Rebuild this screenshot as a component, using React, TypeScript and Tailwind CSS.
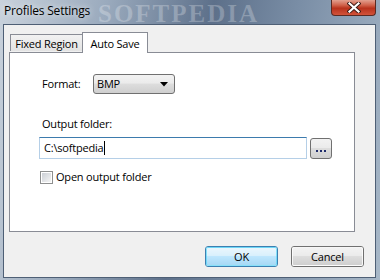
import React from "react";

const font = { fontFamily: '"Open Sans", "Noto Sans", sans-serif' };

function WinButton({ label, primary, className = "" }: { label: string; primary?: boolean; className?: string }) {
  return (
    <div
      className={`relative flex items-center justify-center rounded-[3px] border ${
        primary ? "border-[#3c7fb1]" : "border-[#707070]"
      } ${className}`}
    >
      <div
        className={`absolute inset-0 rounded-[2px] border ${primary ? "border-[#48d3f7]/60" : "border-white/80"}`}
        style={{
          background: primary
            ? "linear-gradient(#eaf6fd 0%, #d9f0fc 45%, #bee6fd 50%, #a7d9f5 100%)"
            : "linear-gradient(#f2f2f2 0%, #ebebeb 45%, #dddddd 50%, #cfcfcf 100%)",
        }}
      />
      <span className="relative text-[11px] leading-none tracking-[-0.2px] text-black">{label}</span>
    </div>
  );
}

export default function App() {
  return (
    <div
      className="relative flex h-[280px] w-[380px] flex-col overflow-hidden"
      style={{
        ...font,
        background: "linear-gradient(100deg, #c9d2dc 0%, #9aaabd 25%, #5d708a 50%, #7a8ea6 70%, #a8b8c8 100%)",
      }}
    >
      {/* title bar */}
      <div className="relative flex h-[24px] shrink-0 items-start">
        <span
          className="absolute left-[98px] top-[1px] text-[25px] font-bold leading-none tracking-[2px] text-white/25"
          style={{ fontFamily: '"Liberation Serif", serif' }}
        >
          SOFTPEDIA
        </span>
        <span
          className="relative ml-[4px] mt-[3px] text-[12px] leading-[16px] tracking-[-0.2px] text-black"
          style={{ textShadow: "0 0 6px rgba(255,255,255,0.9)" }}
        >
          Profiles Settings
        </span>
        <div
          className="absolute right-[4px] top-0 flex h-[16px] w-[45px] items-center justify-center rounded-b-[4px] border border-t-0 border-[#5b2a22]"
          style={{ background: "linear-gradient(#e2a08f 0%, #d0614a 35%, #b8321c 55%, #d2533a 100%)" }}
        >
          <svg width="14" height="11" viewBox="0 0 14 11">
            <path d="M2.5 1.5 L11.5 9.5 M11.5 1.5 L2.5 9.5" stroke="#3a1a14" strokeWidth="4" strokeLinecap="square" />
            <path d="M2.5 1.5 L11.5 9.5 M11.5 1.5 L2.5 9.5" stroke="#ffffff" strokeWidth="2.2" strokeLinecap="square" />
          </svg>
        </div>
      </div>

      {/* client area */}
      <div className="mb-[2px] ml-[3px] mr-[4px] flex flex-1 flex-col border border-[#4e5f75] bg-[#f0f0f0] text-[11px] tracking-[-0.2px]">
        {/* tabs */}
        <div className="ml-[6px] mt-[7px] flex h-[20px] items-end">
          <div
            className="mb-[1px] flex h-[17px] w-[73px] items-center justify-center border border-b-0 border-[#898c95]"
            style={{ background: "linear-gradient(#f2f2f2, #e3e3e3)" }}
          >
            <span className="leading-none text-black">Fixed Region</span>
          </div>
          <div className="relative z-10 -mb-[1px] -ml-[1px] flex h-[21px] w-[66px] items-center justify-center border border-b-0 border-[#898c95] bg-white">
            <span className="leading-none text-black">Auto Save</span>
          </div>
        </div>
        {/* panel */}
        <div className="ml-[5px] flex h-[180px] w-[346px] flex-col border border-[#898c95] bg-white pl-[29px]">
          <div className="mt-[21px] flex h-[20px] items-center">
            <span className="ml-[3px] w-[51px] text-black">Format:</span>
            <div
              className="relative flex h-[20px] w-[82px] items-center rounded-[3px] border border-[#707070]"
              style={{ background: "linear-gradient(#f2f2f2 0%, #ebebeb 45%, #dddddd 50%, #cfcfcf 100%)" }}
            >
              <span className="ml-[3px] text-black">BMP</span>
              <svg className="absolute right-[6px] top-[7px]" width="8" height="5" viewBox="0 0 8 5">
                <path d="M0 0 H8 L4 4.5 Z" fill="#000" />
              </svg>
            </div>
          </div>
          <span className="ml-[3px] mt-[22px] leading-[15px] text-black">Output folder:</span>
          <div className="mt-[6px] flex items-center">
            <div className="flex h-[22px] w-[268px] items-center border border-[#b5cfe7] border-t-[#3d7bad] bg-white">
              <span className="ml-[4px] text-black">C:\softpedia</span>
              <span className="ml-[1px] h-[14px] w-[1px] bg-black" />
            </div>
            <div
              className="ml-[3px] flex h-[21px] w-[22px] items-center justify-center rounded-[3px] border border-[#707070]"
              style={{ background: "linear-gradient(#f2f2f2 0%, #ebebeb 45%, #dddddd 50%, #cfcfcf 100%)" }}
            >
              <div className="mt-[5px] flex gap-[2px]">
                <span className="h-[2px] w-[2px] bg-[#1e2b6b]" />
                <span className="h-[2px] w-[2px] bg-[#1e2b6b]" />
                <span className="h-[2px] w-[2px] bg-[#1e2b6b]" />
              </div>
            </div>
          </div>
          <div className="mt-[10px] flex items-center">
            <div className="ml-[1px] flex h-[13px] w-[13px] items-center justify-center border border-[#8e8f8f] bg-white">
              <div className="h-[9px] w-[9px]" style={{ background: "linear-gradient(135deg, #cbcfd5, #f5f5f5)" }} />
            </div>
            <span className="ml-[3px] text-black">Open output folder</span>
          </div>
        </div>
        {/* buttons */}
        <div className="mt-[14px] flex">
          <WinButton label="OK" primary className="ml-[201px] h-[21px] w-[73px]" />
          <WinButton label="Cancel" className="ml-[13px] h-[21px] w-[73px]" />
        </div>
      </div>
    </div>
  );
}
